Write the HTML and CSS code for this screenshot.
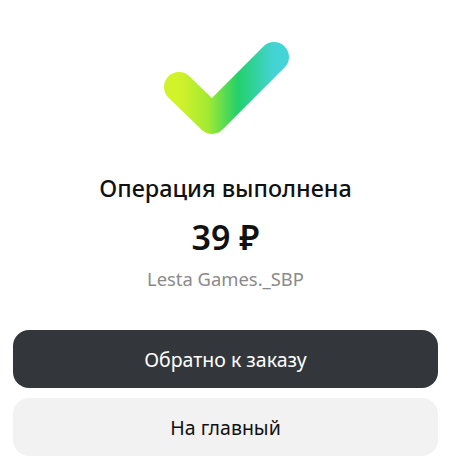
FILE: index.html
```html
<!DOCTYPE html>
<html lang="ru">
<head>
    <meta charset="UTF-8">
    <meta name="viewport" content="width=device-width, initial-scale=1.0">
    <title>Операция выполнена</title>
    <link rel="stylesheet" href="styles.css">
</head>
<body>
    <div class="screen">
        <div class="result">
            <svg class="check" width="130" height="96" viewBox="0 0 130 96">
                <defs>
                    <linearGradient id="checkGrad" x1="0" y1="0" x2="1" y2="0">
                        <stop offset="0" stop-color="#d2f22a"/>
                        <stop offset="0.3" stop-color="#a4ea32"/>
                        <stop offset="0.62" stop-color="#22d06a"/>
                        <stop offset="1" stop-color="#44d4d6"/>
                    </linearGradient>
                </defs>
                <!-- галочка -->
                <path d="M18 47 L51 79 L113 17" fill="none" stroke="url(#checkGrad)" stroke-width="30" stroke-linecap="round" stroke-linejoin="round"/>
            </svg>
            <h2 class="title">Операция выполнена</h2>
            <div class="amount">39 ₽</div>
            <div class="merchant">Lesta Games._SBP</div>
        </div>
        <div class="actions">
            <button type="button" class="btn btn-dark">Обратно к заказу</button>
            <button type="button" class="btn btn-light">На главный</button>
        </div>
    </div>
</body>
</html>
```

FILE: styles.css
```css
body {
  margin: 0;
  padding: 0;
  background-color: #ffffff;
  font-family: "Noto Sans", "Open Sans", sans-serif;
}

.screen {
  display: flex;
  flex-direction: column;
  padding: 40px 12px 9px 13px;
}

.result {
  display: flex;
  flex-direction: column;
  align-items: center;
}

.check {
  display: block;
}

.title {
  margin: 38px 0 0 0;
  font-size: 23.4px;
  font-weight: 500;
  color: #111111;
  line-height: 28px;
}

.amount {
  margin-top: 15px;
  font-size: 34px;
  font-weight: 600;
  color: #111111;
  line-height: 40px;
}

.merchant {
  margin-top: 11px;
  font-size: 18.4px;
  color: #8a8a8a;
  line-height: 22px;
}

.actions {
  display: flex;
  flex-direction: column;
  gap: 10px;
  margin-top: 40px;
}

.btn {
  height: 58px;
  border: none;
  border-radius: 16px;
  font-family: inherit;
  font-size: 19.5px;
  cursor: pointer;
}

.btn-dark {
  background-color: #33373b;
  color: #ffffff;
}

.btn-light {
  background-color: #f2f2f2;
  color: #111111;
}
```
